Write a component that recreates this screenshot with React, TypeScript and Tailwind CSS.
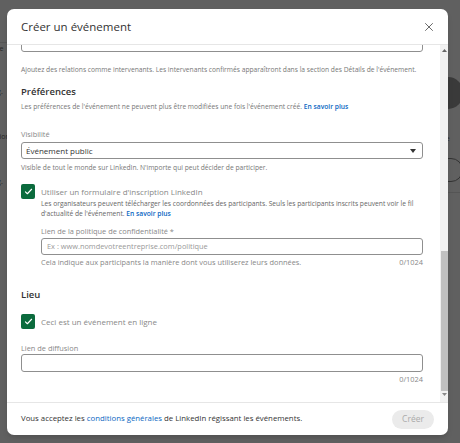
import React from 'react';
import { X } from 'lucide-react';

const font = { fontFamily: '"Open Sans", "Noto Sans", Arial, sans-serif' };

const Check: React.FC = () => (
  <div className="w-[14px] h-[15px] rounded-[2px] bg-[#0b6b3d] flex items-center justify-center shrink-0">
    <svg width="9" height="9" viewBox="0 0 16 16" fill="none">
      <path d="M2.5 8.5l3.5 3.5 7.5-8" stroke="white" strokeWidth="2" strokeLinecap="round" strokeLinejoin="round" />
    </svg>
  </div>
);

export default function App() {
  return (
    <div className="relative w-[460px] h-[443px] overflow-hidden bg-[#606060] text-[#262626]" style={font}>
      {/* Dimmed page underneath */}
      <div className="flex h-full">
        <div className="w-[40px] text-[7px] leading-[10px] pt-[42px] -ml-[12px]">
          <div className="border-t border-[#555] pt-[1px]">Date</div>
          <div className="mt-[33px]">Heg.</div>
          <div className="mt-[35px]">ication</div>
          <div>Vi</div>
          <div className="mt-[25px]">Heg.</div>
          <div>Vi</div>
          <div>ece</div>
          <div className="mt-[59px]">Ha</div>
          <div className="mt-[5px]">on</div>
          <div className="mt-[5px]">L'é</div>
        </div>
        <div className="ml-auto w-[30px] pl-[3px] text-[7px] leading-[10px] pt-[57px]">
          <div className="-ml-[1px]">res</div>
          <div className="mt-[10px] w-[30px] h-[32px] rounded-full bg-[#3a3a3a]" />
          <div className="mt-[24px] text-[8px]">uvre</div>
          <div className="text-[8px]">our</div>
          <div className="mt-[5px] w-[30px] h-[24px] rounded-full border border-[#333] flex items-center pl-[8px] text-[8px]">S</div>
          <div className="mt-[10px] border-t border-[#555]" />
          <div className="mt-[18px]">ibilit</div>
          <div className="mt-[5px]">néra</div>
          <div className="mt-[5px]">cess</div>
          <div className="mt-[5px]">s pr</div>
          <div className="mt-[5px]">ppl</div>
          <div className="mt-[10px]">ked</div>
        </div>
      </div>

      {/* Modal */}
      <div className="absolute left-[7px] top-[9px] w-[441px] h-[426px] bg-white rounded-[7px] flex flex-col overflow-hidden shadow-md">
        <div className="h-[36px] flex items-center justify-between pl-[14px] pr-[12px] border-b border-[#e6e6e6] shrink-0">
          <h1 className="text-[11.5px] text-[#333] font-normal">Créer un événement</h1>
          <X className="w-[14px] h-[14px] text-[#555]" strokeWidth={1.5} />
        </div>

        <div className="flex flex-1 min-h-0">
          <div className="flex-1 overflow-hidden pl-[14px] pr-[17px]">
            <div className="h-[17px] -mt-[10px] border border-[#8f8f8f] rounded-[3px]" />
            <p className="mt-[13px] text-[6.7px] leading-[10px] text-[#777]">
              Ajoutez des relations comme intervenants. Les intervenants confirmés apparaîtront dans la section des Détails de l'événement.
            </p>

            <h2 className="mt-[11px] text-[9.5px] leading-[12px] font-semibold text-[#333]">Préférences</h2>
            <p className="mt-[4px] text-[6.7px] leading-[10px] text-[#777]">
              Les préférences de l'événement ne peuvent plus être modifiées une fois l'événement créé.{' '}
              <span className="text-[#0a66c2] font-semibold">En savoir plus</span>
            </p>

            <div className="mt-[17px] text-[7.4px] leading-[10px] text-[#888]">Visibilité</div>
            <div className="mt-[3px] h-[17px] border border-[#8f8f8f] rounded-[3px] flex items-center justify-between pl-[4px] pr-[6px]">
              <span className="text-[8px] text-[#333]">Événement public</span>
              <svg width="6" height="4" viewBox="0 0 6 4"><path d="M0 0h6L3 4z" fill="#333" /></svg>
            </div>
            <p className="mt-[4px] text-[6.7px] leading-[10px] text-[#777]">
              Visible de tout le monde sur LinkedIn. N'importe qui peut décider de participer.
            </p>

            <div className="mt-[11px] flex gap-[6px]">
              <Check />
              <div className="flex-1">
                <div className="text-[8px] leading-[15px] text-[#888]">Utiliser un formulaire d'inscription LinkedIn</div>
                <p className="text-[6.7px] leading-[9.5px] text-[#666]">
                  Les organisateurs peuvent télécharger les coordonnées des participants. Seuls les participants inscrits peuvent voir le fil d'actualité de l'événement.{' '}
                  <span className="text-[#0a66c2] font-semibold">En savoir plus</span>
                </p>
                <div className="mt-[8px] text-[7.4px] leading-[10px] text-[#888]">Lien de la politique de confidentialité *</div>
                <div className="mt-[2px] h-[17px] border border-[#8f8f8f] rounded-[3px] flex items-center pl-[5px]">
                  <span className="text-[7.4px] text-[#999]">Ex : www.nomdevotreentreprise.com/politique</span>
                </div>
                <div className="mt-[2px] flex justify-between text-[7.4px] leading-[10px] text-[#888]">
                  <span>Cela indique aux participants la manière dont vous utiliserez leurs données.</span>
                  <span>0/1024</span>
                </div>
              </div>
            </div>

            <h2 className="mt-[22px] text-[9.5px] leading-[12px] font-semibold text-[#333]">Lieu</h2>
            <div className="mt-[13px] flex items-center gap-[6px]">
              <Check />
              <span className="text-[8px] leading-[15px] text-[#888]">Ceci est un événement en ligne</span>
            </div>

            <div className="mt-[14px] text-[7.4px] leading-[10px] text-[#888]">Lien de diffusion</div>
            <div className="mt-[1px] h-[18px] border border-[#8f8f8f] rounded-[3px]" />
            <div className="mt-[2px] text-right text-[7.4px] leading-[10px] text-[#888]">0/1024</div>
          </div>

          {/* Scrollbar */}
          <div className="w-[8px] bg-[#f1f1f1] flex flex-col items-center shrink-0">
            <svg className="mt-[4px]" width="5" height="3" viewBox="0 0 5 3"><path d="M2.5 0L5 3H0z" fill="#666" /></svg>
            <div className="mt-[199px] w-[7px] h-[140px] bg-[#c1c1c1]" />
            <svg className="mt-[2px]" width="5" height="3" viewBox="0 0 5 3"><path d="M0 0h5L2.5 3z" fill="#888" /></svg>
          </div>
        </div>

        <div className="h-[33px] shrink-0 border-t border-[#e6e6e6] flex items-center justify-between pl-[14px] pr-[14px]">
          <p className="text-[7.8px] text-[#333]">
            Vous acceptez les <span className="text-[#0a66c2] font-medium">conditions générales</span> de LinkedIn régissant les événements.
          </p>
          <button className="h-[19px] w-[42px] rounded-full bg-[#ebebeb] text-[8.5px] text-[#aaa]">Créer</button>
        </div>
      </div>
    </div>
  );
}
